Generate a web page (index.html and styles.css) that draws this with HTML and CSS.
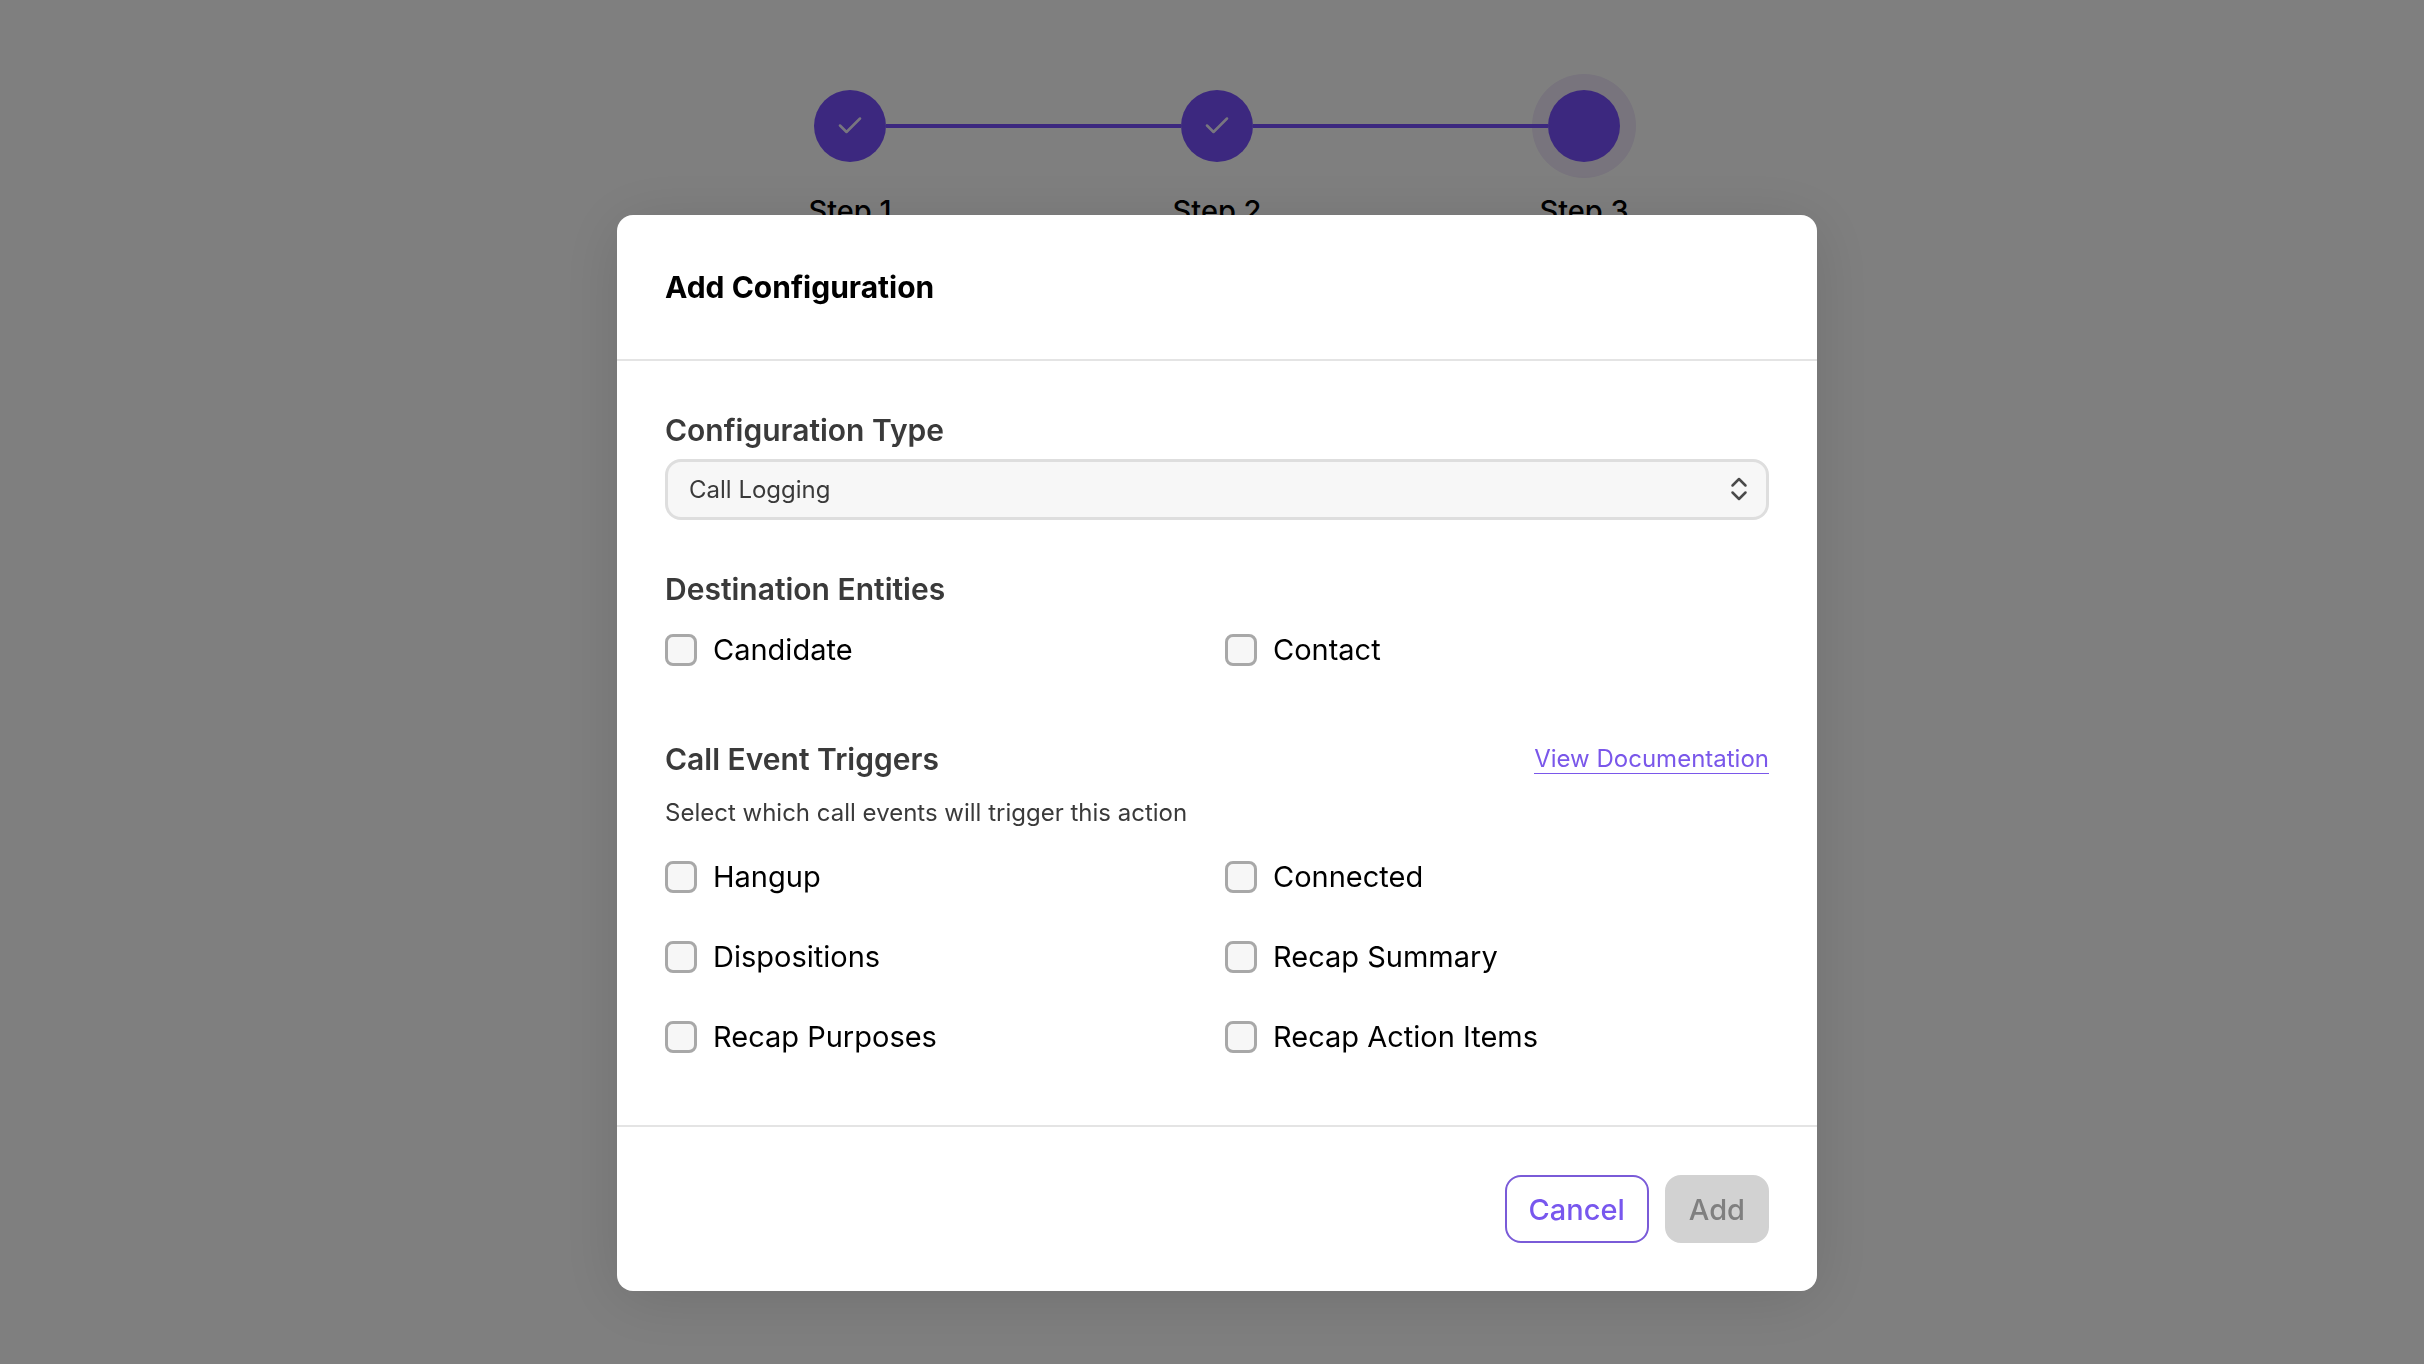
FILE: index.html
```html
<!DOCTYPE html>
<html lang="en">
<head>
    <meta charset="utf-8" />
    <meta name="viewport" content="width=device-width, initial-scale=1" />
    <title>Add Configuration</title>
    <link rel="stylesheet" href="styles.css">
</head>
<body>
    <div class="page">
        <div class="stepper">
            <div class="step">
                <div class="circle">
                    <svg class="check" width="28" height="28" viewBox="0 0 28 28"><path d="M4 13.5l6.5 6.5L24 6.5" /></svg>
                </div>
                <div class="step_name">Step 1</div>
            </div>
            <div class="connector"></div>
            <div class="step">
                <div class="circle">
                    <svg class="check" width="28" height="28" viewBox="0 0 28 28"><path d="M4 13.5l6.5 6.5L24 6.5" /></svg>
                </div>
                <div class="step_name">Step 2</div>
            </div>
            <div class="connector"></div>
            <div class="step">
                <div class="circle current"></div>
                <div class="step_name">Step 3</div>
            </div>
        </div>
    </div>

    <div class="overlay">
        <form class="modal" role="dialog" aria-labelledby="modal_title">
            <div class="modal_header">
                <h2 id="modal_title">Add Configuration</h2>
            </div>

            <div class="modal_body">
                <div class="section">
                    <label class="section_title" for="config_type">Configuration Type</label>
                    <div class="select_wrapper">
                        <select id="config_type">
                            <option>Call Logging</option>
                        </select>
                        <svg class="select_icon" width="20" height="24" viewBox="0 0 20 24"><path d="M3.5 8.5L10 2l6.5 6.5M3.5 15.5L10 22l6.5-6.5" /></svg>
                    </div>
                </div>

                <div class="section">
                    <h3 class="section_title">Destination Entities</h3>
                    <div class="options">
                        <label><input type="checkbox" name="entity" value="candidate">Candidate</label>
                        <label><input type="checkbox" name="entity" value="contact">Contact</label>
                    </div>
                </div>

                <div class="section">
                    <div class="title_row">
                        <h3 class="section_title">Call Event Triggers</h3>
                        <a href="#">View Documentation</a>
                    </div>
                    <p class="hint">Select which call events will trigger this action</p>
                    <div class="options">
                        <label><input type="checkbox" name="trigger" value="hangup">Hangup</label>
                        <label><input type="checkbox" name="trigger" value="connected">Connected</label>
                        <label><input type="checkbox" name="trigger" value="dispositions">Dispositions</label>
                        <label><input type="checkbox" name="trigger" value="summary">Recap Summary</label>
                        <label><input type="checkbox" name="trigger" value="purposes">Recap Purposes</label>
                        <label><input type="checkbox" name="trigger" value="actions">Recap Action Items</label>
                    </div>
                </div>
            </div>

            <div class="modal_footer">
                <button type="button" class="btn btn_outline">Cancel</button>
                <button type="submit" class="btn" disabled>Add</button>
            </div>
        </form>
    </div>
</body>
</html>
```
FILE: styles.css
```css
* {
    box-sizing: border-box;
}

html, body {
    margin: 0;
    padding: 0;
    min-height: 100%;
    font-size: 29px;
    line-height: 42px;
    font-family: Inter, "Liberation Sans", sans-serif;
    color: #000;
    background-color: #fff;
}

h2, h3, p {
    margin: 0;
}

/* stepper */
.page {
    padding: 90px 0 0 10px;
}

.stepper {
    display: flex;
    align-items: flex-start;
    max-width: 806px;
    margin: 0 auto;
}

.step {
    width: 72px;
    display: flex;
    flex-direction: column;
    align-items: center;
}

.circle {
    width: 72px;
    height: 72px;
    border-radius: 50%;
    background-color: #7850fe;
    display: flex;
    align-items: center;
    justify-content: center;
}

    .circle.current {
        box-shadow: 0 0 0 16px #f0e8fa;
    }

.check {
    fill: none;
    stroke: #fff;
    stroke-width: 2.5;
    stroke-linecap: round;
    stroke-linejoin: round;
    opacity: .9;
}

.step_name {
    margin-top: 28px;
    font-weight: 500;
    white-space: nowrap;
}

/* keeps the line above the ring of the current step */
.connector {
    flex: 1;
    height: 4px;
    margin-top: 34px;
    background-color: #7850fe;
    position: relative;
    z-index: 1;
}

/* modal */
.overlay {
    position: fixed;
    inset: 0;
    z-index: 10;
    overflow: auto;
    padding: 215px 0 73px 10px;
    background-color: rgba(0, 0, 0, .5);
}

.modal {
    max-width: 1200px;
    margin: 0 auto;
    border-radius: 16px;
    background-color: #fff;
    box-shadow: 0 8px 64px rgba(0, 0, 0, .12);
}

.modal_header {
    padding: 48px;
    border-bottom: 2px solid #e4e4e4;
}

    .modal_header h2 {
        font-size: 30px;
        line-height: 48px;
        font-weight: 700;
    }

.modal_body {
    padding: 48px;
}

.section + .section {
    margin-top: 48px;
}

.section_title {
    display: block;
    font-size: 30px;
    font-weight: 600;
    color: #3a3a3a;
}

.select_wrapper {
    position: relative;
    margin-top: 8px;
}

    .select_wrapper select {
        display: block;
        width: 100%;
        height: 61px;
        padding: 0 60px 0 21px;
        border: 3px solid #dedede;
        border-radius: 16px;
        background-color: #f7f7f7;
        color: #3a3a3a;
        font-family: inherit;
        font-size: 24px;
        appearance: none;
    }

.select_icon {
    position: absolute;
    top: 18px;
    right: 20px;
    fill: none;
    stroke: #4a4a4a;
    stroke-width: 2.5;
    stroke-linecap: round;
    stroke-linejoin: round;
    pointer-events: none;
}

.options {
    display: grid;
    grid-template-columns: 1fr 1fr;
    column-gap: 16px;
}

    .options label {
        display: flex;
        align-items: center;
        gap: 16px;
        height: 80px;
    }

    .options input {
        width: 32px;
        height: 32px;
        margin: 0;
        border: 3px solid #a8a8a8;
        border-radius: 8px;
        background-color: #f7f7f7;
        appearance: none;
    }

.title_row {
    display: flex;
    align-items: center;
    justify-content: space-between;
}

    .title_row a {
        font-size: 24px;
        line-height: 28px;
        color: #7a57ea;
        text-decoration: none;
        border-bottom: 1px solid #7a57ea;
    }

.hint {
    margin: 16px 0 8px;
    font-size: 24px;
    line-height: 33px;
    color: #3a3a3a;
}

.modal_footer {
    display: flex;
    justify-content: flex-end;
    gap: 16px;
    padding: 48px;
    border-top: 2px solid #e4e4e4;
}

.btn {
    height: 68px;
    padding: 0 22px;
    border: 2px solid #d2d2d2;
    border-radius: 16px;
    background-color: #d2d2d2;
    color: #808080;
    font-family: inherit;
    font-size: 29px;
    font-weight: 500;
}

.btn_outline {
    border-color: #7a5bd8;
    background-color: #fff;
    color: #7857ee;
}
```
